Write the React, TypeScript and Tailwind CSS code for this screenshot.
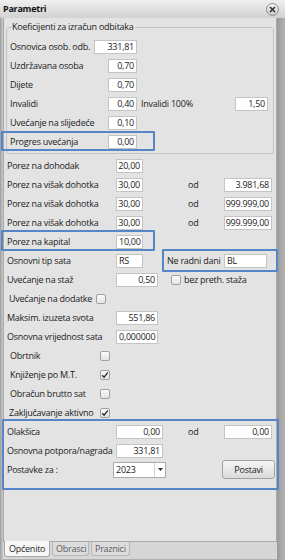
import React from "react";

type InputProps = { w: string; value: string; left?: boolean };

const Input = ({ w, value, left }: InputProps) => (
  <div
    className={`${w} h-[14px] shrink-0 bg-white border border-[#c4c4c4] flex items-center leading-none ${
      left ? "justify-start pl-[2px]" : "justify-end pr-[2px]"
    }`}
  >
    {value}
  </div>
);

const Check = ({ checked }: { checked?: boolean }) => (
  <div className="w-[10px] h-[10px] shrink-0 rounded-[2px] border border-[#a0a0a0] bg-gradient-to-b from-[#fafafa] to-[#e4e4e4] flex items-center justify-center">
    {checked && (
      <svg width="8" height="8" viewBox="0 0 8 8">
        <path d="M1.2 4.2 L3.1 6.2 L6.9 1.4" fill="none" stroke="#2b2b2b" strokeWidth="1.3" />
      </svg>
    )}
  </div>
);

const Row = ({ children }: { children: React.ReactNode }) => (
  <div className="flex h-[19px] items-center whitespace-nowrap">{children}</div>
);

export default function App() {
  return (
    <div className="relative w-[285px] h-[560px] overflow-hidden bg-[#e3e3e3] text-[9px] tracking-[-0.25px] text-[#1c1c1c] font-['Open_Sans',sans-serif]">
      {/* title bar */}
      <div className="h-[18px] flex items-center justify-between pl-[3px] pr-[6px] bg-gradient-to-b from-[#efefef] to-[#d2d2d2]">
        <span className="font-bold text-[9px] text-[#111]">Parametri</span>
        <div className="w-[13px] h-[13px] mt-[1px] rounded-full border border-[#8c8c8c] bg-gradient-to-b from-[#f7f7f7] to-[#c9c9c9] flex items-center justify-center">
          <svg width="7" height="7" viewBox="0 0 7 7">
            <path d="M1 1 L6 6 M6 1 L1 6" stroke="#333" strokeWidth="1.6" />
          </svg>
        </div>
      </div>

      <div className="flex h-[542px]">
        <div className="w-[3px] bg-gradient-to-r from-[#9d9d9d] to-[#cdcdcd]" />

        <div className="flex-1 flex flex-col">
          <div className="flex-1 flex flex-col pt-[3px] border-l border-r border-b border-[#a9a9a9]">
            <fieldset className="mx-[2px] border border-[#c3c3c3] rounded-[3px] pb-[2px]">
              <legend className="ml-[4px] px-[1px] leading-[12px]">Koeficijenti za izračun odbitaka</legend>
              <div className="pt-[4px]">
                <Row>
                  <span className="w-[87px] pl-[3px]">Osnovica osob. odb.</span>
                  <Input w="w-[43px]" value="331,81" />
                </Row>
                <Row>
                  <span className="w-[101px] pl-[3px]">Uzdržavana osoba</span>
                  <Input w="w-[29px]" value="0,70" />
                </Row>
                <Row>
                  <span className="w-[101px] pl-[3px]">Dijete</span>
                  <Input w="w-[29px]" value="0,70" />
                </Row>
                <Row>
                  <span className="w-[101px] pl-[3px]">Invalidi</span>
                  <Input w="w-[29px]" value="0,40" />
                  <span className="w-[98px] pl-[4px]">Invalidi 100%</span>
                  <Input w="w-[33px]" value="1,50" />
                </Row>
                <Row>
                  <span className="w-[101px] pl-[3px]">Uvećanje na slijedeće</span>
                  <Input w="w-[29px]" value="0,10" />
                </Row>
                <Row>
                  <span className="w-[101px] pl-[3px]">Progres uvećanja</span>
                  <Input w="w-[29px]" value="0,00" />
                </Row>
              </div>
            </fieldset>

            <div className="mt-[2px]">
              <Row>
                <span className="w-[112px] pl-[3px]">Porez na dohodak</span>
                <Input w="w-[27px]" value="20,00" />
              </Row>
              <Row>
                <span className="w-[112px] pl-[3px]">Porez na višak dohotka</span>
                <Input w="w-[27px]" value="30,00" />
                <span className="ml-[45px] w-[36px]">od</span>
                <Input w="w-[48px]" value="3.981,68" />
              </Row>
              <Row>
                <span className="w-[112px] pl-[3px]">Porez na višak dohotka</span>
                <Input w="w-[27px]" value="30,00" />
                <span className="ml-[45px] w-[36px]">od</span>
                <Input w="w-[48px]" value="999.999,00" />
              </Row>
              <Row>
                <span className="w-[112px] pl-[3px]">Porez na višak dohotka</span>
                <Input w="w-[27px]" value="30,00" />
                <span className="ml-[45px] w-[36px]">od</span>
                <Input w="w-[48px]" value="999.999,00" />
              </Row>
              <Row>
                <span className="w-[112px] pl-[3px]">Porez na kapital</span>
                <Input w="w-[27px]" value="10,00" left />
              </Row>
              <Row>
                <span className="w-[112px] pl-[3px]">Osnovni tip sata</span>
                <Input w="w-[27px]" value="RS" left />
                <span className="ml-[24px] w-[57px]">Ne radni dani</span>
                <Input w="w-[43px]" value="BL" left />
              </Row>
              <Row>
                <span className="w-[112px] pl-[3px]">Uvećanje na staž</span>
                <Input w="w-[42px]" value="0,50" />
                <span className="ml-[13px]">
                  <Check />
                </span>
                <span className="ml-[3px]">bez preth. staža</span>
              </Row>
              <Row>
                <span className="w-[92px] pl-[5px]">Uvećanje na dodatke</span>
                <Check />
              </Row>
              <Row>
                <span className="w-[112px] pl-[3px]">Maksim. izuzeta svota</span>
                <Input w="w-[42px]" value="551,86" />
              </Row>
              <Row>
                <span className="w-[112px] pl-[3px]">Osnovna vrijednost sata</span>
                <Input w="w-[42px]" value="0,000000" left />
              </Row>
              <Row>
                <span className="w-[96px] pl-[6px]">Obrtnik</span>
                <Check />
              </Row>
              <Row>
                <span className="w-[96px] pl-[6px]">Knjiženje po M.T.</span>
                <Check checked />
              </Row>
              <Row>
                <span className="w-[96px] pl-[6px]">Obračun brutto sat</span>
                <Check />
              </Row>
              <Row>
                <span className="w-[96px] pl-[5px]">Zaključavanje aktivno</span>
                <Check checked />
              </Row>
              <Row>
                <span className="w-[112px] pl-[3px]">Olakšica</span>
                <Input w="w-[47px]" value="0,00" />
                <span className="ml-[25px] w-[36px]">od</span>
                <Input w="w-[48px]" value="0,00" />
              </Row>
              <Row>
                <span className="w-[112px] pl-[3px]">Osnovna potpora/nagrada</span>
                <Input w="w-[47px]" value="331,81" />
              </Row>
              <Row>
                <span className="w-[109px] pl-[3px]">Postavke za :</span>
                <div className="w-[53px] h-[16px] flex bg-white border border-[#ababab]">
                  <span className="flex-1 pl-[2px] leading-[14px]">2023</span>
                  <div className="w-[11px] border-l border-[#d0d0d0] flex items-center justify-center">
                    <svg width="5" height="3" viewBox="0 0 5 3">
                      <path d="M0 0 H5 L2.5 3 Z" fill="#333" />
                    </svg>
                  </div>
                </div>
                <div className="ml-[56px] w-[53px] h-[19px] rounded-[3px] border border-[#a2a2a2] bg-gradient-to-b from-[#f5f5f5] to-[#dadada] flex items-center justify-center">
                  Postavi
                </div>
              </Row>
            </div>
          </div>

          {/* tabs */}
          <div className="h-[18px] flex items-start pl-[1px] bg-[#d6d6d6] border-b border-[#b0b0b0]">
            <div className="w-[46px] h-[16px] -mt-[1px] pl-[4px] flex items-center bg-[#f7f7f7] border border-t-0 border-[#a5a5a5] rounded-b-[3px]">
              Općenito
            </div>
            <div className="ml-[2px] w-[37px] h-[14px] pl-[3px] flex items-center bg-[#dcdcdc] border border-t-0 border-[#b7b7b7] rounded-b-[3px] text-[#5c5c5c]">
              Obrasci
            </div>
            <div className="ml-[2px] w-[39px] h-[14px] pl-[3px] flex items-center bg-[#dcdcdc] border border-t-0 border-[#b7b7b7] rounded-b-[3px] text-[#5c5c5c]">
              Praznici
            </div>
          </div>
        </div>

        <div className="w-[8px] bg-gradient-to-r from-[#9a9a9a] to-[#b3b3b3]" />
      </div>

      {/* highlight outlines drawn over the form */}
      <div className="absolute left-[1px] top-[131px] w-[154px] h-[20px] border-2 border-[#5685c8] rounded-[1px] pointer-events-none" />
      <div className="absolute left-[1px] top-[230px] w-[154px] h-[21px] border-2 border-[#5685c8] rounded-[1px] pointer-events-none" />
      <div className="absolute left-[162px] top-[249px] w-[116px] h-[23px] border-2 border-[#5685c8] rounded-[1px] pointer-events-none" />
      <div className="absolute left-[2px] top-[419px] w-[277px] h-[71px] border-2 border-[#5685c8] rounded-[1px] pointer-events-none" />
    </div>
  );
}
